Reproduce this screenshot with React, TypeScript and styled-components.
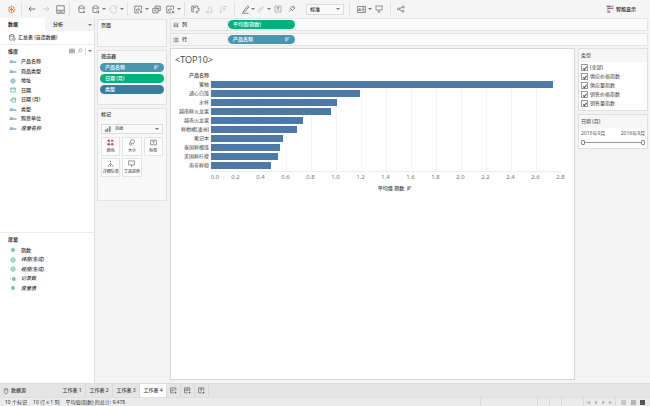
import React from "react";
import styled, { createGlobalStyle, css } from "styled-components";

const GlobalStyle = createGlobalStyle`
  *, *::before, *::after { box-sizing: border-box; }
  body {
    margin: 0;
    background: #f3f3f3;
    color: #3a3a3a;
    font-family: "Noto Sans", "Noto Sans CJK SC", sans-serif;
    font-size: 5px;
    line-height: 9px;
  }
  button, select, input { font: inherit; color: inherit; margin: 0; }
  h1, h2, p, ul, ol { margin: 0; padding: 0; font: inherit; list-style: none; }
  svg { display: block; flex: none; }
`;

/* ---------- icons ---------- */

type IconName =
  | "logo" | "back" | "forward" | "save" | "addData" | "pauseData" | "refresh"
  | "newSheet" | "duplicate" | "clearSheet" | "swap" | "sortAsc" | "sortDesc"
  | "highlight" | "clip" | "text" | "pin" | "cards" | "present" | "share" | "smart"
  | "columns" | "rows" | "source" | "cylinder" | "globe" | "calendar" | "calcCalendar"
  | "hash" | "calcHash" | "table" | "search" | "sort" | "bars" | "color" | "size"
  | "label" | "detail" | "tooltip" | "addSheet" | "addBoard" | "addStory";

const plus = (x: number, y: number) => <path d={`M${x - 3} ${y}h6M${x} ${y - 3}v6`} strokeWidth="2.4" />;

const drawings: Record<IconName, React.ReactNode> = {
  logo: (
    <>
      <path d="M12 8v8M8 12h8" stroke="#e8762d" strokeWidth="2.6" />
      <path d="M12 1.500v5M9.500 4h5" stroke="#b98a78" />
      <path d="M12 17.500v5M9.500 20h5" stroke="#b98a78" />
      <path d="M4 9.500v5M1.500 12h5M20 9.500v5M17.500 12h5" stroke="#e2a05a" />
      <path d="M6.500 4.500v5M4 7h5M17.500 14.500v5M15 17h5" stroke="#d97062" />
      <path d="M17.500 4.500v5M15 7h5M6.500 14.500v5M4 17h5" stroke="#eb9137" />
    </>
  ),
  back: <path d="M22 12H3M10 5l-7 7 7 7" strokeWidth="2.6" />,
  forward: <path d="M2 12h19M14 5l7 7-7 7" strokeWidth="2.6" />,
  save: <><path d="M2 2h20v20H2zM2 14h20" /><path d="M8 22v-4h8v4" /></>,
  addData: <><path d="M14 20H8c-2 0-3-1-3-2V6M19 6v7M5 6c0-2 3-4 7-4s7 2 7 4-3 3-7 3-7-1-7-3z" />{plus(18, 19)}</>,
  pauseData: <><path d="M13 20H8c-2 0-3-1-3-2V6M19 6v6M5 6c0-2 3-4 7-4s7 2 7 4-3 3-7 3-7-1-7-3z" /><path d="M16 15v7M20 15v7" strokeWidth="2.4" /></>,
  refresh: <path d="M3 14a9 9 0 0 1 16-8l2 2M21 2v7h-7M21 13a9 9 0 0 1-15 6l-3-2" />,
  newSheet: <><path d="M14 21H2V3h18v9M7 17v-6M11 17V7M15 14v-4" />{plus(19, 18)}</>,
  duplicate: <path d="M8 3h14v12h-6M8 3v5M2 9h14v12H2zM6 17v-3M9 17v-5M12 17v-2M13 11V7M18 11V7" />,
  clearSheet: <><path d="M14 21H2V3h18v9M7 17v-6M11 17V7M15 13v-3" /><path d="M16 16l6 6M22 16l-6 6" strokeWidth="2.4" /></>,
  swap: <path d="M2 3h16v5M2 3v15h6M6 7h7M6 7v8M20 9c3 6 0 10-6 10M17 15l-4 4 4 4M17 11l3-3 3 3" />,
  sortAsc: <path d="M3 21v-5M8 21v-9M3 21h8M17 3v18M13 17l4 4 4-4M8 8h5M10 5h3" />,
  sortDesc: <path d="M5 3v18M1 17l4 4 4-4M10 4h12M10 9h9M10 14h6" />,
  highlight: <path d="M9 13L18 2l3 3-9 11-5 2zM7 18l-3 1M2 22h18" />,
  clip: <path d="M8 15l8-10c2-2 5 0 3 3L9 20c-3 3-7 0-4-4L14 5" />,
  text: <><path d="M3 3h18v18H3z" strokeDasharray="2 1" /><path d="M8 8h8M12 8v9" /></>,
  pin: <path d="M9 7l7-4 5 6-6 6-3 1-5-6zM9 14l-6 6M14 5l5 6M7 10l6 6" />,
  cards: <path d="M1 4h22v16H1zM4 16v-4M7 16V8M10 16v-6M14 8h6M14 12h6M14 16h6" />,
  present: <path d="M1 3h22M3 3v12h18V3M12 15v6M7 21h10" />,
  share: <><circle cx="5" cy="12" r="3.500" /><circle cx="19" cy="6" r="3" /><circle cx="18" cy="19" r="3" /><path d="M8 10l8-3M8 14l7 4" /></>,
  smart: (
    <>
      <path d="M2 2h12v4H2z" fill="#5b6d99" stroke="none" />
      <path d="M4 8h18v4H4z" fill="#a66a8c" stroke="none" />
      <path d="M2 14h9v3H2z" fill="#d4838c" stroke="none" />
      <path d="M4 19h9v4H4z" fill="#7f6a93" stroke="none" />
      <path d="M16 2h6v4h-6z" fill="#9c9cb4" stroke="none" />
    </>
  ),
  columns: <path d="M5 3v4M5 9v12M12 3v4M12 9v12M19 3v4M19 9v12" strokeWidth="3" />,
  rows: <path d="M2 5h4M8 5h14M2 12h4M8 12h14M2 19h4M8 19h14" strokeWidth="2.600" />,
  source: <><path d="M11 21H5c-2 0-3-1-3-3V5M17 5v6M2 5c0-2 3-3 8-3s7 1 7 3-3 3-7 3-8-1-8-3z" /><circle cx="17" cy="17" r="4.500" stroke="#4a8fb5" strokeWidth="3" /></>,
  cylinder: <path d="M5 5v14c0 4 14 4 14 0V5M5 5c0-4 14-4 14 0s-14 4-14 0z" />,
  globe: <><circle cx="12" cy="12" r="9" /><path d="M3 12h18M12 3c-6 5-6 13 0 18 6-5 6-13 0-18z" /></>,
  calendar: <path d="M3 4h18v16H3zM3 8h18" strokeWidth="2.600" />,
  calcCalendar: <path d="M8 4h14v16H8zM8 8h14M0 13h6M3 10v6" strokeWidth="2.600" />,
  hash: <path d="M9 4v16M15 4v16M4 9h16M4 15h16" strokeWidth="2.600" />,
  calcHash: <path d="M13 4v16M18 4v16M8 9h15M8 15h15M0 12h5" strokeWidth="2.600" />,
  table: <path d="M2 4h20v16H2zM2 9h20M2 14h20M9 4v16M15 4v16" />,
  search: <><circle cx="14" cy="9" r="6" /><path d="M10 14l-7 7" /></>,
  sort: <path d="M4 2v20M4 4h18M4 10h13M4 16h8" strokeWidth="2.800" />,
  bars: <path d="M2 22v-7h3v7zM9 22V11h3v11zM18 22V2h3v20z" />,
  color: (
    <g stroke="none">
      <circle cx="6" cy="6" r="4.500" fill="#b85c72" /><circle cx="18" cy="6" r="4.500" fill="#c96b6b" />
      <circle cx="6" cy="18" r="4.500" fill="#8c5878" /><circle cx="18" cy="18" r="4.500" fill="#d04c5c" />
    </g>
  ),
  size: <><circle cx="15" cy="9" r="7" /><path d="M8 12a4.500 4.500 0 1 0 5 7l-1-3" /></>,
  label: <path d="M2 4h20v16H2zM8 8h8M12 8v8" />,
  detail: <path d="M12 3v4M12 10v3M8 16l4-3 4 3M2 20h4M10 20h4M18 20h4" strokeWidth="3" />,
  tooltip: <path d="M2 3h20v14h-7l-3 5v-5H2z" />,
  addSheet: <><path d="M13 20H2V3h18v9M6 15v-4M10 15V7M14 12V9" />{plus(19, 19)}</>,
  addBoard: <><path d="M13 20H2V3h18v9M2 11h18M11 3v8" />{plus(19, 19)}</>,
  addStory: <><path d="M13 20H2V3h18v9M7 7h8M11 7v8" />{plus(19, 19)}</>,
};

function Icon({ name, size = 8 }: { name: IconName; size?: number }) {
  return (
    <svg width={size} height={size} viewBox="0 0 24 24" fill="none" stroke="currentColor" strokeWidth="2" aria-hidden="true">
      {drawings[name]}
    </svg>
  );
}

const Caret = styled.span`
  width: 4px;
  display: flex;
  justify-content: center;
  flex: none;
  &::after {
    content: "";
    border: 2px solid transparent;
    border-top: 2px solid #777;
    border-bottom: 0;
  }
`;

/* ---------- frame ---------- */

const Page = styled.div`
  min-height: 100vh;
  display: flex;
  flex-direction: column;
`;

const Toolbar = styled.header`
  height: 18px;
  display: flex;
  align-items: center;
  background: #f5f5f5;
`;

const ToolGroup = styled.div<{ $pad?: string }>`
  height: 14px;
  display: flex;
  align-items: center;
  padding: ${(p) => p.$pad ?? "0 3px"};
  border-left: 1px solid #e2e2e2;
  &:first-child { border-left: 0; }
`;

const ToolButton = styled.button<{ $dim?: boolean; $slim?: boolean }>`
  width: ${(p) => (p.$slim ? 12 : 14)}px;
  height: 14px;
  padding: 0;
  border: 0;
  background: none;
  display: flex;
  align-items: center;
  justify-content: center;
  flex: none;
  color: ${(p) => (p.$dim ? "#c4c4c4" : "#666")};
`;

const SelectBox = styled.div<{ $wide?: boolean }>`
  display: flex;
  align-items: center;
  gap: 4px;
  height: ${(p) => (p.$wide ? 10 : 11)}px;
  width: ${(p) => (p.$wide ? "auto" : "38px")};
  margin: ${(p) => (p.$wide ? "0" : "0 1px 0 7px")};
  padding: 0 3px;
  border: 1px solid #dcdcdc;
  background: #fafafa;
  color: #333;
  font-size: ${(p) => (p.$wide ? 4 : 5)}px;
  font-weight: 500;
`;

const Select = styled.select`
  appearance: none;
  flex: 1;
  min-width: 0;
  padding: 0;
  border: 0;
  outline: 0;
  background: none;
  line-height: 8px;
`;

const SmartButton = styled.button`
  margin-left: auto;
  margin-right: 14px;
  padding: 0;
  border: 0;
  background: none;
  display: flex;
  align-items: center;
  gap: 2px;
  font-weight: 500;
  color: #222;
`;

const Workspace = styled.div`
  flex: 1;
  display: flex;
  min-height: 0;
`;

/* ---------- data pane ---------- */

const DataPane = styled.aside`
  width: 95px;
  flex: none;
  display: flex;
  flex-direction: column;
  background: #fff;
  border-right: 1px solid #e0e0e0;
`;

const PaneTabs = styled.div`
  height: 13px;
  display: flex;
`;

const PaneTab = styled.button<{ $active?: boolean }>`
  width: ${(p) => (p.$active ? 45 : 49)}px;
  padding: 0 2px 0 8px;
  border: 0;
  display: flex;
  align-items: center;
  justify-content: space-between;
  background: ${(p) => (p.$active ? "#fff" : "#f3f3f3")};
  font-weight: ${(p) => (p.$active ? 600 : 500)};
  color: #222;
`;

const SourceRow = styled.div`
  height: 14px;
  padding-left: 9px;
  display: flex;
  align-items: center;
  gap: 2px;
  font-weight: 500;
  border-bottom: 1px solid #ececec;
`;

const FieldSection = styled.section<{ $grow: number }>`
  flex: ${(p) => p.$grow} 0 0;
  & + & { border-top: 1px solid #ececec; }
`;

const SectionHead = styled.div`
  height: 12px;
  padding: 0 2px 0 8px;
  display: flex;
  align-items: center;
  gap: 2px;
  color: #777;
  h2 { flex: 1; font-weight: 600; color: #333; }
`;

const SearchDivider = styled.span`
  height: 7px;
  border-left: 1px solid #ddd;
`;

const FieldList = styled.ul<{ $height: number }>`
  height: ${(p) => p.$height}px;
  display: grid;
  grid-auto-rows: 1fr;
`;

const Field = styled.li<{ $tone: "blue" | "green"; $italic?: boolean }>`
  display: flex;
  align-items: center;
  gap: 3px;
  padding-left: 8px;
  font-weight: 500;
  color: #333;
  font-style: ${(p) => (p.$italic ? "italic" : "normal")};
  > :first-child { color: ${(p) => (p.$tone === "blue" ? "#4e8fb0" : "#3bb08f")}; }
`;

const Glyph = styled.span`
  width: 10px;
  display: flex;
  justify-content: center;
  font-style: normal;
  font-weight: 600;
  font-size: 4px;
`;

/* ---------- cards ---------- */

const CardColumn = styled.div`
  width: 75px;
  flex: none;
  padding: 1px 3px 0 2px;
  display: flex;
  flex-direction: column;
  gap: 3px;
`;

const Card = styled.section<{ $min: number }>`
  min-height: ${(p) => p.$min}px;
  padding: 1px 2px 0;
  border: 1px solid #e2e2e2;
  background: #f8f8f8;
  h2 { padding-left: 1px; font-weight: 500; color: #333; }
`;

const pillTones = { green: "#00b180", blue: "#4996b2", deep: "#387d9f" };

const Pill = styled.li<{ $tone: keyof typeof pillTones; $shelf?: boolean }>`
  height: 9px;
  padding: 0 5px;
  display: flex;
  align-items: center;
  justify-content: space-between;
  border-radius: 5px;
  background: ${(p) => pillTones[p.$tone]};
  color: #fff;
  font-weight: 500;
  ${(p) => p.$shelf && css`width: 67px;`}
`;

const PillList = styled.ul`
  margin-top: 2px;
  display: grid;
  gap: 2px;
`;

const MarkBody = styled.div`
  padding: 5px 1px 0;
  display: grid;
  gap: 3px;
`;

const MarkGrid = styled.div`
  display: grid;
  grid-template-columns: repeat(3, 1fr);
  gap: 2px;
`;

const MarkButton = styled.button`
  height: 19px;
  padding: 0;
  border: 1px solid #e4e4e4;
  background: #fdfdfd;
  display: flex;
  flex-direction: column;
  align-items: center;
  justify-content: center;
  gap: 1px;
  font-size: 4px;
  font-weight: 500;
  line-height: 7px;
  white-space: nowrap;
  color: #555;
`;

/* ---------- shelves and view ---------- */

const Main = styled.main`
  flex: 1;
  min-width: 0;
  padding: 0 2px 3px 0;
  display: flex;
  flex-direction: column;
  gap: 2px;
`;

const Shelf = styled.div`
  height: 13px;
  display: flex;
  align-items: center;
  background: #fbfbfb;
  border: 1px solid #e4e4e4;
`;

const ShelfName = styled.div`
  width: 57px;
  padding-left: 2px;
  display: flex;
  align-items: center;
  gap: 3px;
  align-self: stretch;
  font-weight: 500;
  background: #f6f6f6;
  border-right: 1px solid #e8e8e8;
`;

const Stage = styled.div`
  flex: 1;
  display: flex;
  gap: 3px;
`;

const Sheet = styled.section`
  flex: 1;
  min-width: 0;
  padding: 4px 13px 4px 0;
  background: #fff;
  border: 1px solid #d8d8d8;
  h1 {
    padding-left: 4px;
    font: 400 9px/14px "Open Sans", sans-serif;
    color: #444;
  }
`;

const Chart = styled.div`
  margin-top: 4px;
  display: grid;
  grid-template-columns: 40px 1fr;
`;

const ChartHead = styled.div`
  grid-column: 1;
  padding-right: 2px;
  text-align: right;
  font-weight: 500;
  white-space: nowrap;
`;

const Labels = styled.ol`
  grid-column: 1;
  padding-right: 2px;
  text-align: right;
  white-space: nowrap;
  color: #444;
`;

const Plot = styled.ol`
  border-bottom: 1px solid #eee;
  background-image: linear-gradient(to right, #f4f4f4 1px, transparent 1px);
  background-size: calc(100% / 14) 100%;
`;

const Bar = styled.li`
  height: 7px;
  margin: 1px 0 2px;
  background: #4e79a7;
`;

const Axis = styled.ol`
  grid-column: 2;
  margin: 1px -12px 0 -13px;
  display: grid;
  grid-template-columns: repeat(15, minmax(0, 1fr));
  font-size: 6px;
  text-align: center;
  color: #777;
  li:first-child { padding-left: 9px; }
`;

const AxisTitle = styled.p`
  grid-column: 2;
  margin-top: 2px;
  padding-left: 18px;
  display: flex;
  align-items: center;
  justify-content: center;
  gap: 3px;
  font-weight: 500;
`;

const FilterColumn = styled.aside`
  width: 70px;
  flex: none;
  display: flex;
  flex-direction: column;
  gap: 3px;
`;

const FilterCard = styled.fieldset`
  margin: 0;
  padding: 0;
  min-width: 0;
  border: 1px solid #e0e0e0;
  background: #fff;
`;

const FilterTitle = styled.h2`
  height: 13px;
  padding: 2px 2px 0;
  background: #f6f6f6;
`;

const FilterBody = styled.div`
  padding: 1px 2px 2px;
`;

const Check = styled.label`
  height: 9px;
  display: flex;
  align-items: center;
  gap: 2px;
  input {
    appearance: none;
    width: 7px;
    height: 7px;
    border: 1px solid #999;
    background: #fff;
    display: grid;
    place-items: center;
  }
  input:checked::after {
    content: "";
    width: 2px;
    height: 4px;
    border: solid #444;
    border-width: 0 1px 1px 0;
    transform: rotate(40deg);
  }
`;

const RangeLabels = styled.div`
  display: flex;
  justify-content: space-between;
  color: #555;
`;

const Range = styled.div`
  display: grid;
  height: 8px;
  align-items: center;
  &::before {
    content: "";
    grid-area: 1 / 1;
    height: 1px;
    background: #999;
  }
  input {
    grid-area: 1 / 1;
    appearance: none;
    width: 100%;
    min-width: 0;
    height: 5px;
    background: none;
    pointer-events: none;
  }
  input::-webkit-slider-thumb {
    appearance: none;
    pointer-events: auto;
    width: 4px;
    height: 5px;
    border: 1px solid #888;
    border-radius: 1px;
    background: #fff;
  }
`;

/* ---------- bottom bars ---------- */

const SheetTabs = styled.nav`
  height: 14px;
  display: flex;
  background: #e5e5e5;
  border-top: 1px solid #dcdcdc;
`;

const SheetTab = styled.button<{ $active?: boolean; $source?: boolean; $icon?: boolean }>`
  width: ${(p) => (p.$source ? 59 : p.$icon ? 14 : 27)}px;
  padding: ${(p) => (p.$source ? "0 0 0 3px" : "0")};
  border: 0;
  border-right: ${(p) => (p.$source ? 0 : 1)}px solid #d8d8d8;
  display: flex;
  align-items: center;
  justify-content: ${(p) => (p.$source ? "flex-start" : "center")};
  gap: 2px;
  white-space: nowrap;
  font-weight: 500;
  color: #444;
  background: ${(p) => (p.$active ? "#fff" : "none")};
`;

const StatusBar = styled.footer`
  height: 9px;
  padding-left: 5px;
  display: flex;
  align-items: center;
  gap: 6px;
  background: #ebebeb;
  border-top: 1px solid #dedede;
  color: #333;
  line-height: 8px;
`;

const StatusCells = styled.div`
  margin-left: auto;
  align-self: stretch;
  display: flex;
`;

const StatusCell = styled.div<{ $width: number }>`
  width: ${(p) => p.$width}px;
  border-left: 1px solid #dadada;
  display: flex;
  align-items: center;
  justify-content: space-evenly;
`;

const TinyButton = styled.button<{ $fill?: string }>`
  width: 5px;
  height: 5px;
  padding: 0;
  border: 0;
  background: ${(p) => p.$fill ?? "none"};
  color: #aaa;
`;

/* ---------- data ---------- */

type FieldDef = { name: string; icon?: IconName; green?: boolean; italic?: boolean };

const dimensions: FieldDef[] = [
  { name: "产品名称" },
  { name: "商品类型" },
  { name: "地址", icon: "globe" },
  { name: "日期", icon: "calendar", green: true },
  { name: "日期 (月)", icon: "calcCalendar", green: true },
  { name: "类型" },
  { name: "购货单位" },
  { name: "度量名称", italic: true },
];

const measures: FieldDef[] = [
  { name: "指数", icon: "hash", green: true },
  { name: "纬度(生成)", icon: "globe", green: true, italic: true },
  { name: "经度(生成)", icon: "globe", green: true, italic: true },
  { name: "记录数", icon: "calcHash", green: true, italic: true },
  { name: "度量值", icon: "hash", green: true, italic: true },
];

const products: [string, number][] = [
  ["蜜柚", 2.737],
  ["通心白莲", 1.195],
  ["水杯", 1.008],
  ["越南鲜火龙果", 0.962],
  ["越南火龙果", 0.735],
  ["鲜柑橘(澳洲)", 0.687],
  ["笔记本", 0.575],
  ["泰国鲜榴莲", 0.55],
  ["美国鲜柠檬", 0.538],
  ["南非鲜橙", 0.478],
];

const axisMax = 2.8;
const ticks = Array.from({ length: 15 }, (_, i) => (i * 0.2).toFixed(1));

const marks: [string, IconName][] = [
  ["颜色", "color"],
  ["大小", "size"],
  ["标签", "label"],
  ["详细信息", "detail"],
  ["工具提示", "tooltip"],
];

const indexTypes = ["(全部)", "供应价格指数", "供应量指数", "销售价格指数", "销售量指数"];

/* ---------- parts ---------- */

function Tool({ icon, label, dim, slim, menu, size = 8 }: {
  icon: IconName; label: string; dim?: boolean; slim?: boolean; menu?: boolean; size?: number;
}) {
  return (
    <>
      <ToolButton type="button" aria-label={label} $dim={dim} $slim={slim}>
        <Icon name={icon} size={size} />
      </ToolButton>
      {menu && <Caret />}
    </>
  );
}

function Fields({ items, height }: { items: FieldDef[]; height: number }) {
  return (
    <FieldList $height={height}>
      {items.map((f) => (
        <Field key={f.name} $tone={f.green ? "green" : "blue"} $italic={f.italic}>
          <Glyph>{f.icon ? <Icon name={f.icon} size={6} /> : "Abc"}</Glyph>
          {f.name}
        </Field>
      ))}
    </FieldList>
  );
}

export default function App() {
  return (
    <Page>
      <GlobalStyle />
      <Toolbar>
        <ToolGroup $pad="0 3px 0 4px"><Tool icon="logo" label="开始页面" size={9} /></ToolGroup>
        <ToolGroup $pad="0 2px 0 3px">
          <Tool icon="back" label="撤消" />
          <Tool icon="forward" label="重做" dim />
          <Tool icon="save" label="保存" size={9} />
        </ToolGroup>
        <ToolGroup $pad="0 3px 0 4px">
          <Tool icon="addData" label="新建数据源" size={9} />
          <Tool icon="pauseData" label="暂停自动更新" menu size={9} />
          <Tool icon="refresh" label="运行更新" dim menu size={9} />
        </ToolGroup>
        <ToolGroup>
          <Tool icon="newSheet" label="新建工作表" menu size={9} />
          <Tool icon="duplicate" label="复制工作表" size={9} />
          <Tool icon="clearSheet" label="清除工作表" menu size={9} />
        </ToolGroup>
        <ToolGroup $pad="0 4px 0 3px">
          <Tool icon="swap" label="交换行和列" size={9} />
          <Tool icon="sortAsc" label="升序排序" dim size={9} />
          <Tool icon="sortDesc" label="降序排序" dim size={9} />
        </ToolGroup>
        <ToolGroup $pad="0 4px">
          <Tool icon="highlight" label="突出显示" slim menu size={9} />
          <Tool icon="clip" label="组成员" dim slim menu />
          <Tool icon="text" label="显示标记标签" />
          <Tool icon="pin" label="固定轴" />
          <SelectBox>
            <Select aria-label="适合" defaultValue="标准"><option>标准</option></Select>
            <Caret />
          </SelectBox>
        </ToolGroup>
        <ToolGroup $pad="0 4px">
          <Tool icon="cards" label="显示/隐藏卡" menu size={9} />
          <Tool icon="present" label="演示模式" />
        </ToolGroup>
        <ToolGroup><Tool icon="share" label="共享" /></ToolGroup>
        <SmartButton type="button"><Icon name="smart" size={8} />智能显示</SmartButton>
      </Toolbar>

      <Workspace>
        <DataPane>
          <PaneTabs>
            <PaneTab type="button" $active>数据</PaneTab>
            <PaneTab type="button">分析<Caret /></PaneTab>
          </PaneTabs>
          <SourceRow><Icon name="source" size={7} />汇总表 (自造数据)</SourceRow>
          <FieldSection $grow={5}>
            <SectionHead>
              <h2>维度</h2>
              <Icon name="table" size={6} />
              <Icon name="search" size={6} />
              <SearchDivider />
              <Caret />
            </SectionHead>
            <Fields items={dimensions} height={76} />
          </FieldSection>
          <FieldSection $grow={4}>
            <SectionHead><h2>度量</h2></SectionHead>
            <Fields items={measures} height={48} />
          </FieldSection>
        </DataPane>

        <CardColumn>
          <Card $min={28}><h2>页面</h2></Card>
          <Card $min={55}>
            <h2>筛选器</h2>
            <PillList>
              <Pill $tone="blue">产品名称<Icon name="sort" size={5} /></Pill>
              <Pill $tone="green">日期 (月)</Pill>
              <Pill $tone="deep">类型</Pill>
            </PillList>
          </Card>
          <Card $min={93}>
            <h2>标记</h2>
            <MarkBody>
              <SelectBox $wide>
                <Icon name="bars" size={6} />
                <Select aria-label="标记类型" defaultValue="自动"><option>自动</option></Select>
                <Caret />
              </SelectBox>
              <MarkGrid>
                {marks.map(([name, icon]) => (
                  <MarkButton type="button" key={name}><Icon name={icon} size={7} />{name}</MarkButton>
                ))}
              </MarkGrid>
            </MarkBody>
          </Card>
        </CardColumn>

        <Main>
          <Shelf>
            <ShelfName><Icon name="columns" size={6} />列</ShelfName>
            <ul><Pill $tone="green" $shelf>平均值(指数)</Pill></ul>
          </Shelf>
          <Shelf>
            <ShelfName><Icon name="rows" size={6} />行</ShelfName>
            <ul><Pill $tone="blue" $shelf>产品名称<Icon name="sort" size={5} /></Pill></ul>
          </Shelf>
          <Stage>
            <Sheet>
              <h1>&lt;TOP10&gt;</h1>
              <Chart>
                <ChartHead>产品名称</ChartHead>
                <Labels>{products.map(([name]) => <li key={name}>{name}</li>)}</Labels>
                <Plot>
                  {products.map(([name, value]) => (
                    <Bar key={name} style={{ width: `${(value / axisMax) * 100}%` }} />
                  ))}
                </Plot>
                <Axis>{ticks.map((t) => <li key={t}>{t}</li>)}</Axis>
                <AxisTitle>平均值 指数<Icon name="sort" size={5} /></AxisTitle>
              </Chart>
            </Sheet>
            <FilterColumn>
              <FilterCard aria-label="类型">
                <FilterTitle>类型</FilterTitle>
                <FilterBody>
                  {indexTypes.map((t) => (
                    <Check key={t}><input type="checkbox" defaultChecked />{t}</Check>
                  ))}
                </FilterBody>
              </FilterCard>
              <FilterCard aria-label="日期 (月)">
                <FilterTitle>日期 (月)</FilterTitle>
                <FilterBody>
                  <RangeLabels><span>2015年9月</span><span>2016年9月</span></RangeLabels>
                  <Range>
                    <input type="range" aria-label="开始月份" min={0} max={12} defaultValue={0} />
                    <input type="range" aria-label="结束月份" min={0} max={12} defaultValue={12} />
                  </Range>
                </FilterBody>
              </FilterCard>
            </FilterColumn>
          </Stage>
        </Main>
      </Workspace>

      <SheetTabs>
        <SheetTab type="button" $source><Icon name="cylinder" size={6} />数据源</SheetTab>
        {[1, 2, 3, 4].map((n) => (
          <SheetTab type="button" key={n} $active={n === 4}>工作表 {n}</SheetTab>
        ))}
        <SheetTab type="button" $icon aria-label="新建工作表"><Icon name="addSheet" size={7} /></SheetTab>
        <SheetTab type="button" $icon aria-label="新建仪表板"><Icon name="addBoard" size={7} /></SheetTab>
        <SheetTab type="button" $icon aria-label="新建故事"><Icon name="addStory" size={7} /></SheetTab>
      </SheetTabs>
      <StatusBar>
        <span>10 个标记</span>
        <span>10 行 x 1 列</span>
        <span>平均值(指数) 的总计: 9.478</span>
        <StatusCells>
          <StatusCell $width={57} />
          <StatusCell $width={12} />
          <StatusCell $width={12} />
          <StatusCell $width={22} />
          <StatusCell $width={32}>
            {["M5 4v16M18 5l-8 7 8 7z", "M17 4l-9 8 9 8z", "M8 4l9 8-9 8z", "M19 4v16M6 5l8 7-8 7z"].map((d, i) => (
              <TinyButton type="button" key={d} aria-label={["第一个", "上一个", "下一个", "最后一个"][i]}>
                <svg width="5" height="5" viewBox="0 0 24 24" fill="currentColor" stroke="currentColor" strokeWidth="2"><path d={d} /></svg>
              </TinyButton>
            ))}
          </StatusCell>
          <StatusCell $width={35}>
            <TinyButton type="button" aria-label="显示标签" $fill="#c8c8c8" />
            <TinyButton type="button" aria-label="显示缩略图" $fill="#b4b4b4" />
            <TinyButton type="button" aria-label="显示工作表" $fill="#555" />
          </StatusCell>
        </StatusCells>
      </StatusBar>
    </Page>
  );
}
